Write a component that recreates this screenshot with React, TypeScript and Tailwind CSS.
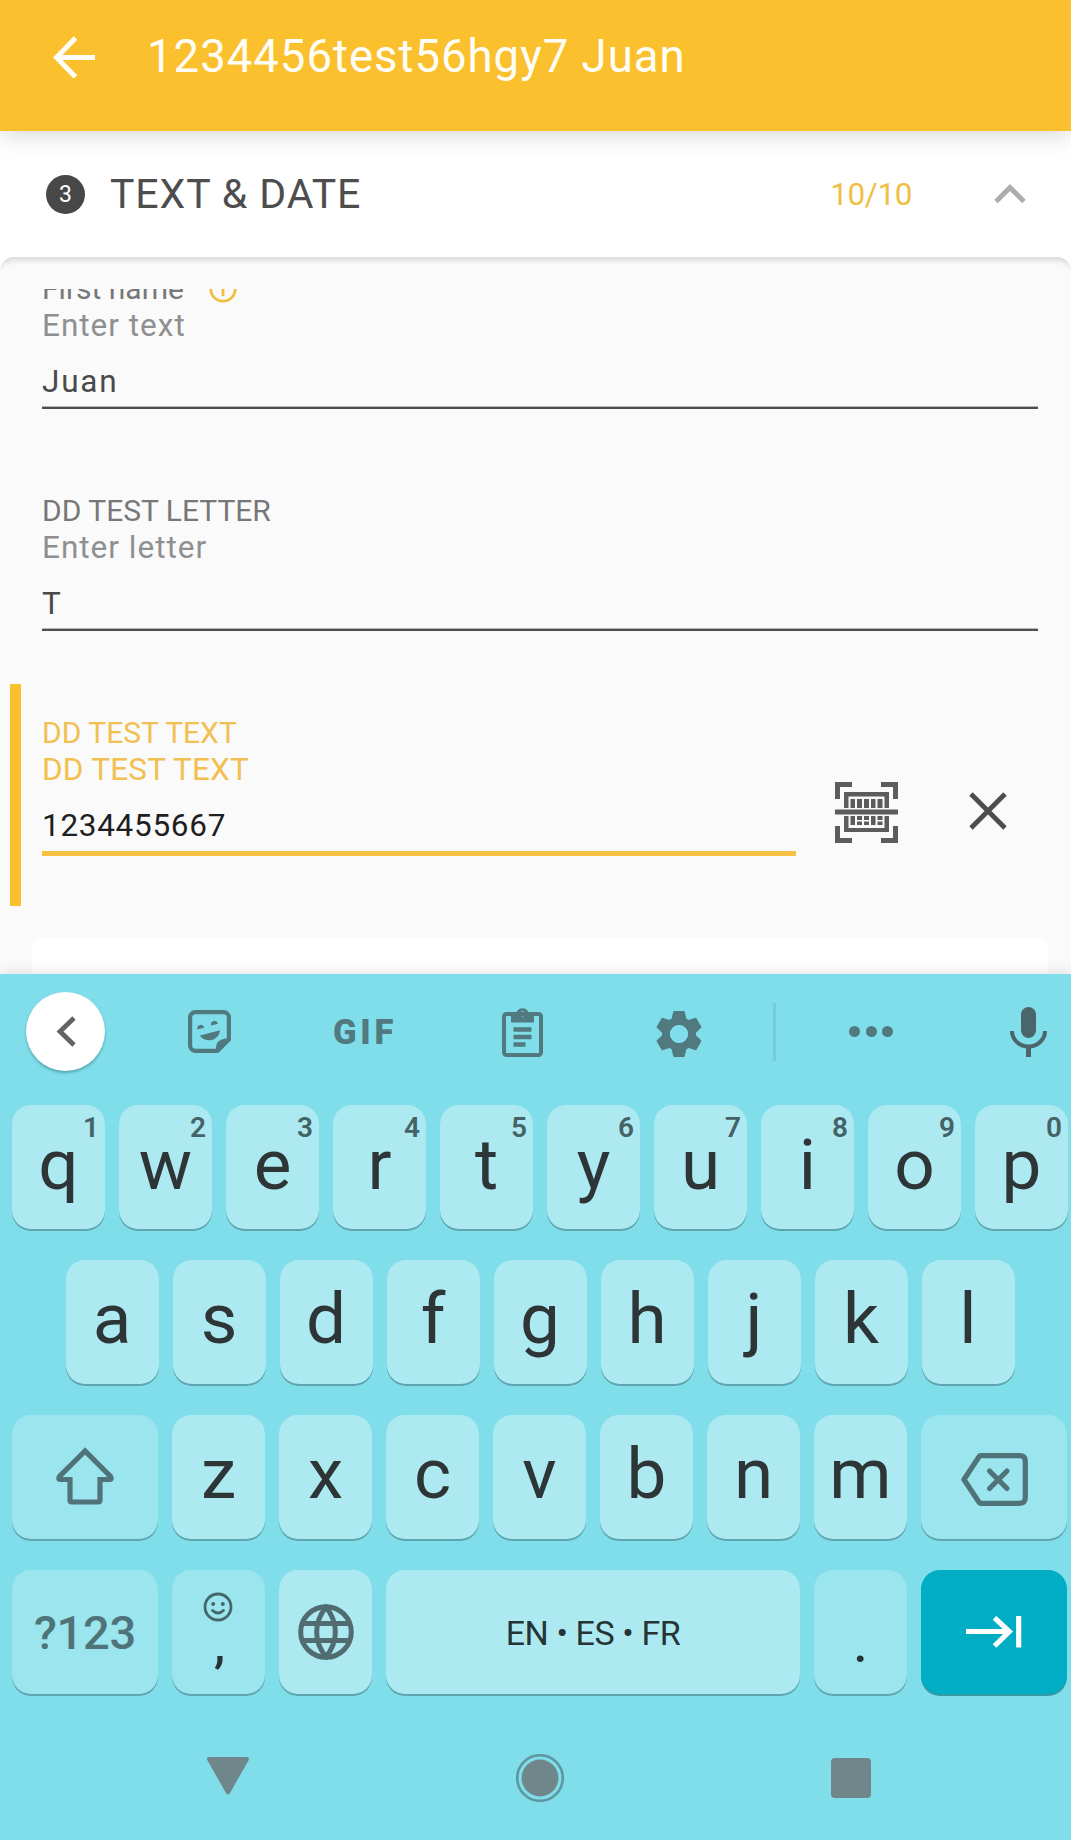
import type { ReactNode } from "react";

const TOP_ROW = ["q", "w", "e", "r", "t", "y", "u", "i", "o", "p"];
const MIDDLE_ROW = ["a", "s", "d", "f", "g", "h", "j", "k", "l"];
const BOTTOM_ROW = ["z", "x", "c", "v", "b", "n", "m"];

type Tone = "light" | "dim" | "accent";

const TONES: Record<Tone, string> = {
  light: "bg-[#ade9f1] shadow-[0_2px_0_#5ea5af]",
  dim: "bg-[#9ae5ee] shadow-[0_2px_0_#5ea5af]",
  accent: "bg-[#00adc5] shadow-[0_2px_0_#3a98a6]",
};

function Key({ tone = "light", width = "w-[93px]", children }: { tone?: Tone; width?: string; children: ReactNode }) {
  return (
    <div className={`relative flex h-[124px] flex-none justify-center rounded-[19px] ${width} ${TONES[tone]}`}>
      {children}
    </div>
  );
}

function LetterKey({ letter, hint }: { letter: string; hint?: string }) {
  return (
    <Key>
      <span className={`text-[71px] text-[#2e3536] ${hint ? "leading-[119px]" : "leading-[117px]"}`}>{letter}</span>
      {hint && (
        <span className="absolute top-[7px] right-[6px] text-[28px] leading-[31px] font-semibold text-[#456267]">
          {hint}
        </span>
      )}
    </Key>
  );
}

function Field({ label, hint, value, info }: { label: string; hint: string; value: string; info?: boolean }) {
  return (
    <div className="h-[222px] pt-[30px] pr-[33px] pl-[42px]">
      <div className="flex h-[37px] items-center text-[30px] leading-[37px] text-[#777]">
        <span>{label}</span>
        {info && <InfoIcon />}
      </div>
      <div className="text-[31.5px] leading-[37px] tracking-[1px] text-[#8f8f8f]">{hint}</div>
      <div className="mt-[19px] text-[31.5px] leading-[37px] tracking-[1.8px] text-[#4a4a4a]">{value}</div>
      <div className="mt-[6px] h-[3px] border-t border-[#b5b5b5] bg-[#4d4d4d]" />
    </div>
  );
}

function InfoIcon() {
  return (
    <svg className="ml-[25px] h-[28px] w-[28px]" viewBox="0 0 28 28" fill="none" stroke="#f2bd3d" strokeWidth="2.8">
      <circle cx="14" cy="14" r="12.2" />
      <path d="M14 12.5V21M14 7v3" />
    </svg>
  );
}

function BarcodeIcon() {
  return (
    <svg className="h-[61px] w-[63px]" viewBox="0 0 63 61" fill="#5c5c5c">
      <path d="M0 0h17v5H5v12H0zM46 0h17v17h-5V5H46zM0 44h5v12h12v5H0zM58 44h5v17H46v-5h12z" />
      <path d="M9 10h45v16h-4.500V14.500H13.500V26H9zM9 34h4.500v12h36V34H54v16H9z" />
      <path d="M0 27.500h63v5H0z" />
      <path d="M15.500 17h4.500v9h-4.500zM22 17h5v9h-5zM29 17h5v9h-5zM36 17h4.500v9H36zM42.500 17h5v9h-5z" />
      <path d="M15.500 34h4.500v9h-4.500zM22 34h5v4h-5zM22 39.500h5V43h-5zM29 34h5v4h-5zM29 39.500h5V43h-5zM36 34h4.500v9H36zM42.500 34h5v4h-5zM42.500 39.500h5V43h-5z" />
    </svg>
  );
}

function StickerIcon() {
  return (
    <svg className="ml-[83px] h-[43px] w-[43px] flex-none" viewBox="0 0 43 43" fill="#507a80">
      <path
        d="M7.500 2.100H35.500A5.400 5.400 0 0 1 40.900 7.500V29.500L29.500 40.900H7.500A5.400 5.400 0 0 1 2.100 35.500V7.500A5.400 5.400 0 0 1 7.500 2.100Z"
        fill="none"
        stroke="#507a80"
        strokeWidth="4.200"
      />
      <path d="M41 28.500H37Q28 30 28 37.500V41H30Z" />
      <path d="M9.300 19.500a3.600 4 0 0 1 7-1.800zM23 15.500a3.600 4 0 0 1 7-1.800z" />
      <path d="M12 25.500L32 20.300C31.500 26 27 30.200 21.500 30.200C17 30.200 13.500 28.500 12 25.500Z" />
    </svg>
  );
}

function ClipboardIcon() {
  return (
    <svg className="ml-[107px] h-[50px] w-[41px] flex-none" viewBox="0 0 41 50">
      <rect x="2" y="7" width="37" height="41" rx="2.500" fill="none" stroke="#507a80" strokeWidth="4" />
      <path
        fillRule="evenodd"
        fill="#507a80"
        d="M9 6H14.500A6.200 6.200 0 0 1 26.500 6H32V15.500H9ZM20.500 4.200a2.600 2.600 0 1 0 0 5.200a2.600 2.600 0 1 0 0-5.200Z"
      />
      <path d="M11.500 22.500h18M11.500 30h18M11.500 37.500h12" stroke="#507a80" strokeWidth="4.400" />
    </svg>
  );
}

function GearIcon() {
  const teeth = [0, 60, 120, 180, 240, 300];
  return (
    <svg className="mt-[4px] ml-[113px] h-[46px] w-[46px] flex-none" viewBox="-23 -23 46 46" fill="#507a80">
      {teeth.map((angle) => (
        <path key={angle} transform={`rotate(${angle})`} d="M-5.200 -22.500H5.200L7.600 -12H-7.600Z" strokeLinejoin="round" stroke="#507a80" />
      ))}
      <circle r="13" fill="none" stroke="#507a80" strokeWidth="8" />
      <circle r="9" fill="#80deea" />
    </svg>
  );
}

function MicIcon() {
  return (
    <svg className="ml-[117px] h-[50px] w-[37px] flex-none" viewBox="0 0 37 50">
      <rect x="11" y="0" width="15" height="31" rx="7.500" fill="#4a666b" />
      <path d="M2 24a16.500 15.500 0 0 0 33 0" fill="none" stroke="#4a666b" strokeWidth="4" />
      <path d="M18.500 39v11" stroke="#4a666b" strokeWidth="5" />
    </svg>
  );
}

function GlobeIcon() {
  return (
    <svg className="h-[56px] w-[56px]" viewBox="0 0 56 56" fill="none" stroke="#506c70" strokeWidth="5">
      <circle cx="28" cy="28" r="25.300" />
      <path d="M28 3C15.500 19 15.500 37 28 53C40.500 37 40.500 19 28 3ZM5 19.500H51M5 36.500H51" />
    </svg>
  );
}

function SmileyIcon() {
  return (
    <svg className="absolute top-[22px] left-[31px] h-[30px] w-[30px]" viewBox="0 0 30 30" fill="none" stroke="#44676c" strokeWidth="2.800">
      <circle cx="15" cy="15" r="13" />
      <path d="M9.500 18.500Q15 23.500 20.500 18.500" strokeLinecap="round" />
      <circle cx="10.200" cy="12" r="2" fill="#44676c" stroke="none" />
      <circle cx="19.800" cy="12" r="2" fill="#44676c" stroke="none" />
    </svg>
  );
}

function Header() {
  return (
    <header className="relative z-10 flex h-[131px] bg-[#fbc02d] shadow-[0_4px_22px_rgba(0,0,0,0.16)]">
      <svg className="mt-[36px] ml-[53px] h-[42px] w-[42px]" viewBox="0 0 42 42" fill="none" stroke="#fffef6" strokeWidth="5">
        <path d="M42 21.500H4M22.500 2L3.500 21.500L22.500 41" />
      </svg>
      <h1 className="ml-[52px] text-[45.500px] leading-[113px] tracking-[1px] whitespace-nowrap text-[#fffef6]">
        1234456test56hgy7 Juan
      </h1>
    </header>
  );
}

function SectionBar() {
  return (
    <div className="flex h-[126px] items-center bg-white pr-[45px] pl-[46px]">
      <span className="flex h-[39px] w-[39px] items-center justify-center rounded-full bg-[#484848] text-[23px] leading-none text-white">
        3
      </span>
      <h2 className="ml-[25px] text-[41px] leading-[126px] tracking-[0.9px] text-[#4d4d4d]">TEXT &amp; DATE</h2>
      <span className="ml-auto text-[31.5px] leading-[127px] tracking-[-0.4px] text-[#f0be45]">10/10</span>
      <svg className="ml-[82px] h-[20px] w-[32px]" viewBox="0 0 32 20" fill="none" stroke="#adadad" strokeWidth="5">
        <path d="M2 17.500L16 3.500L30 17.500" />
      </svg>
    </div>
  );
}

function ActiveField() {
  return (
    <div className="ml-[10px] flex h-[222px] border-l-[11px] border-[#fbc02d] pl-[21px]">
      <div className="w-[754px] flex-none pt-[30px]">
        <div className="text-[30px] leading-[37px] text-[#f1c050]">DD TEST TEXT</div>
        <div className="text-[31.5px] leading-[37px] tracking-[0.2px] text-[#f1c050]">DD TEST TEXT</div>
        <div className="mt-[19px] text-[31.5px] leading-[37px] tracking-[0.7px] text-[#1f1f1f]">1234455667</div>
        <div className="mt-[7px] h-[5px] bg-[#f5c242]" />
      </div>
      <div className="mt-[98px] ml-[39px]">
        <BarcodeIcon />
      </div>
      <svg className="mt-[108px] ml-[71px] h-[38px] w-[38px]" viewBox="0 0 38 38" stroke="#4d4d4d" strokeWidth="4.800">
        <path d="M2 2L36 36M36 2L2 36" />
      </svg>
    </div>
  );
}

function Form() {
  return (
    <div className="bg-white">
      <div className="h-[717px] rounded-t-[14px] bg-[#fafafa] pt-[32px] shadow-[inset_0_10px_6px_-7px_rgba(0,0,0,0.15)]">
        <div className="h-[685px] overflow-hidden">
          <div className="-mt-[49px]">
            <Field label="First name" hint="Enter text" value="Juan" info />
            <Field label="DD TEST LETTER" hint="Enter letter" value="T" />
            <ActiveField />
            <div className="mt-[31px] mr-[23px] ml-[32px] h-[60px] rounded-t-[12px] bg-white" />
          </div>
        </div>
      </div>
    </div>
  );
}

function Toolbar() {
  return (
    <div className="mb-[16px] flex h-[115px] items-center pl-[26px]">
      <div className="flex h-[79px] w-[79px] flex-none items-center justify-center rounded-full bg-white shadow-[0_2px_3px_rgba(0,60,70,0.35)]">
        <svg className="h-[31px] w-[20px]" viewBox="0 0 20 31" fill="none" stroke="#636363" strokeWidth="4.800">
          <path d="M18 2L4 15.500L18 29" />
        </svg>
      </div>
      <StickerIcon />
      <span className="ml-[102px] w-[62px] flex-none text-[34.5px] leading-[36px] font-black tracking-[3.800px] whitespace-nowrap text-[#507a80]">
        GIF
      </span>
      <ClipboardIcon />
      <GearIcon />
      <div className="ml-[71px] h-[58px] w-[3px] bg-[#74cdd9]" />
      <div className="ml-[73px] flex gap-[5.500px]">
        <span className="h-[11px] w-[11px] rounded-full bg-[#507a80]" />
        <span className="h-[11px] w-[11px] rounded-full bg-[#507a80]" />
        <span className="h-[11px] w-[11px] rounded-full bg-[#507a80]" />
      </div>
      <MicIcon />
    </div>
  );
}

function Keyboard() {
  return (
    <div className="relative h-[866px] bg-[#80deea] shadow-[0_-2px_12px_rgba(0,0,0,0.1)]">
      <Toolbar />
      <div className="flex flex-col gap-[31px] pl-[12px]">
        <div className="flex gap-[14px]">
          {TOP_ROW.map((letter, i) => (
            <LetterKey key={letter} letter={letter} hint={String((i + 1) % 10)} />
          ))}
        </div>
        <div className="flex gap-[14px] pl-[53.500px]">
          {MIDDLE_ROW.map((letter) => (
            <LetterKey key={letter} letter={letter} />
          ))}
        </div>
        <div className="flex gap-[14px]">
          <Key tone="dim" width="w-[146px]">
            <svg className="mt-[32px] h-[58px] w-[60px]" viewBox="0 0 60 58" fill="none" stroke="#4f7378" strokeWidth="5.200">
              <path d="M30 4L4.500 29.500Q2.500 32.500 5.500 32.500H15V53Q15 55 17 55H43Q45 55 45 53V32.500H54.500Q57.500 32.500 55.500 29.500Z" />
            </svg>
          </Key>
          {BOTTOM_ROW.map((letter) => (
            <LetterKey key={letter} letter={letter} />
          ))}
          <Key tone="dim" width="w-[146px]">
            <svg className="mt-[38px] h-[53px] w-[67px]" viewBox="0 0 67 53" fill="none" stroke="#4f7378" strokeWidth="5.200" strokeLinejoin="round">
              <path d="M20 2.700H58.500Q64.300 2.700 64.300 8.500V44.500Q64.300 50.300 58.500 50.300H20Q18.500 50.300 17.500 48.500L3 26.500L17.500 4.500Q18.500 2.700 20 2.700Z" />
              <path d="M28.500 18L46 35.500M46 18L28.500 35.500" strokeLinecap="round" />
            </svg>
          </Key>
        </div>
        <div className="flex gap-[14px]">
          <Key tone="dim" width="w-[146px]">
            <span className="text-[47px] leading-[126px] font-medium tracking-[-0.200px] text-[#4f7378]">?123</span>
          </Key>
          <Key tone="dim">
            <SmileyIcon />
            <span className="pl-[2px] text-[50px] leading-[150px] font-medium text-[#263436]">,</span>
          </Key>
          <Key>
            <div className="flex items-center">
              <GlobeIcon />
            </div>
          </Key>
          <Key width="w-[414px]">
            <span className="text-[34px] leading-[127px] tracking-[-0.400px] text-[#263436]">EN • ES • FR</span>
          </Key>
          <Key tone="dim">
            <span className="text-[50px] leading-[150px] font-medium text-[#263436]">.</span>
          </Key>
          <Key tone="accent" width="w-[146px]">
            <svg className="mt-[46px] h-[32px] w-[56px]" viewBox="0 0 56 32" fill="none" stroke="#fff" strokeWidth="5.200">
              <path d="M0 15.500H44M28.500 1.800L43.300 15.500L28.500 30M52.700 0V31.500" />
            </svg>
          </Key>
        </div>
      </div>
      <div className="flex pt-[60px] pl-[207px]">
        <svg className="mt-[3px] h-[38px] w-[42px]" viewBox="0 0 42 38" fill="#6f878b" stroke="#6f878b" strokeWidth="4" strokeLinejoin="round">
          <path d="M2 2H40L21 35.500Z" />
        </svg>
        <svg className="ml-[267px] h-[48px] w-[48px]" viewBox="0 0 48 48">
          <circle cx="24" cy="24" r="22.800" fill="none" stroke="#5e96a1" strokeWidth="2.600" />
          <circle cx="24" cy="24" r="18.500" fill="#6f878b" />
        </svg>
        <div className="mt-[4px] ml-[267px] h-[40px] w-[40px] rounded-[4px] bg-[#6f878b]" />
      </div>
    </div>
  );
}

export default function App() {
  return (
    <div className="h-[1840px] w-[1071px] overflow-hidden bg-white font-['Roboto',sans-serif]">
      <Header />
      <SectionBar />
      <Form />
      <Keyboard />
    </div>
  );
}
